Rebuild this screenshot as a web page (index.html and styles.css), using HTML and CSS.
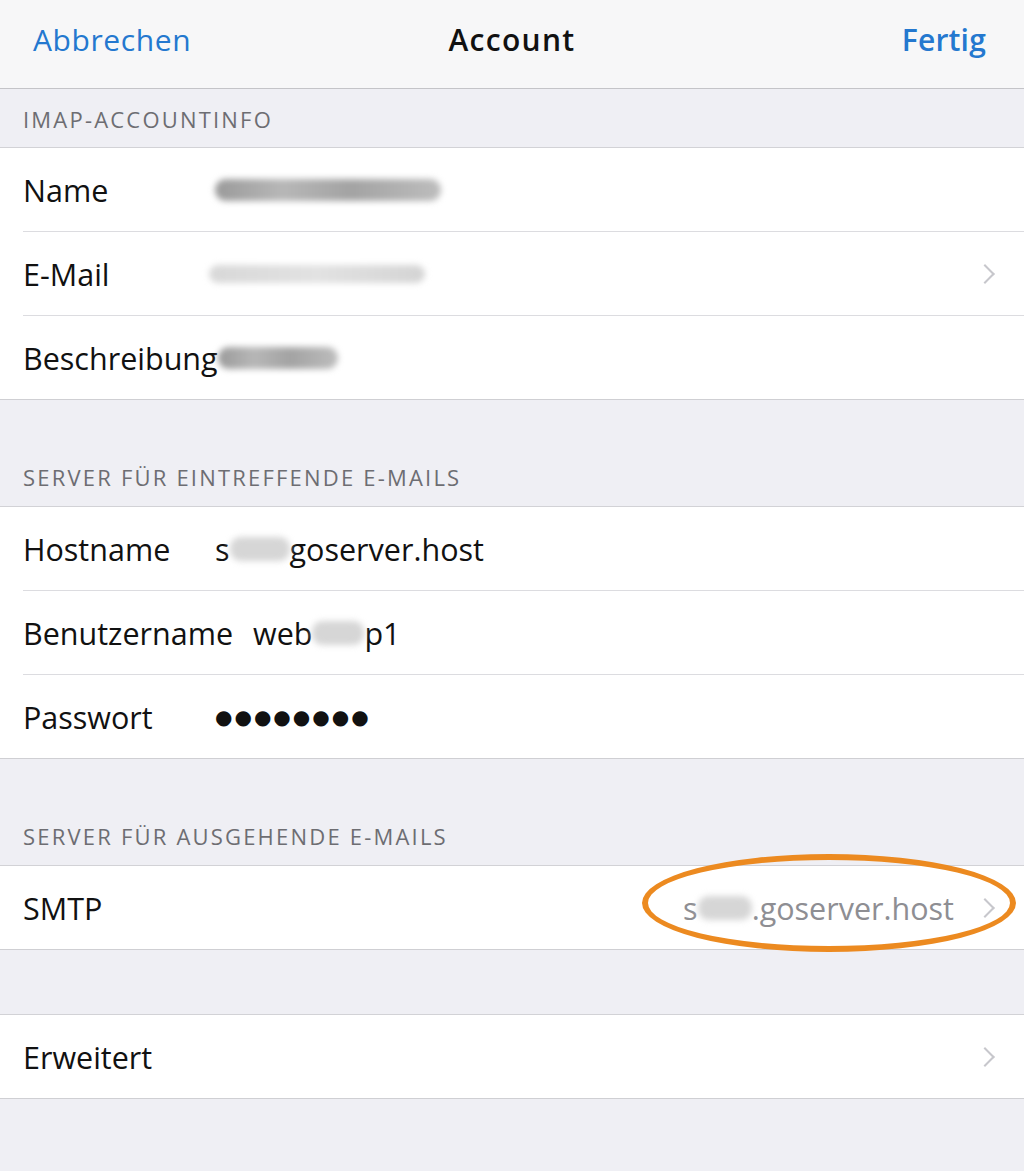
FILE: index.html
```html
<!DOCTYPE html>
<html lang="de">
<head>
<meta charset="utf-8">
<title>Account</title>
<link rel="stylesheet" href="styles.css">
</head>
<body>
<div class="screen">
  <header class="navbar">
    <span class="nav-btn">Abbrechen</span>
    <span class="nav-title">Account</span>
    <span class="nav-btn nav-done">Fertig</span>
  </header>

  <div class="section-head first">IMAP-ACCOUNTINFO</div>
  <div class="group">
    <div class="row"><span class="label">Name</span><span class="value"><span class="smudge dark" style="width:226px"></span></span></div>
    <div class="row"><span class="label">E-Mail</span><span class="value shift-left"><span class="smudge light" style="width:216px"></span></span><span class="chev"></span></div>
    <div class="row last"><span class="label auto">Beschreibung</span><span class="value"><span class="smudge dark" style="width:120px"></span></span></div>
  </div>

  <div class="section-head">SERVER FÜR EINTREFFENDE E-MAILS</div>
  <div class="group">
    <div class="row"><span class="label">Hostname</span><span class="value">s<span class="smudge light small" style="width:60px"></span>goserver.host</span></div>
    <div class="row"><span class="label auto gap">Benutzername</span><span class="value">web<span class="smudge light small" style="width:52px"></span>p1</span></div>
    <div class="row last"><span class="label">Passwort</span><span class="value dots">●●●●●●●●</span></div>
  </div>

  <div class="section-head">SERVER FÜR AUSGEHENDE E-MAILS</div>
  <div class="group">
    <div class="row last smtp">
      <span class="label">SMTP</span>
      <span class="value detail">s<span class="smudge light small" style="width:54px"></span>.goserver.host</span>
      <span class="chev"></span>
      <span class="ring"></span>
    </div>
  </div>

  <div class="spacer"></div>
  <div class="group">
    <div class="row last"><span class="label">Erweitert</span><span class="fill"></span><span class="chev"></span></div>
  </div>
</div>
</body>
</html>
```

FILE: styles.css
```css
html, body {
  margin: 0;
  padding: 0;
}
body {
  background: #efeff4;
  font-family: "Open Sans", "Liberation Sans", sans-serif;
  color: #111;
}
.screen {
  width: 1024px;
  min-height: 1171px;
  background: #efeff4;
}
.navbar {
  height: 89px;
  box-sizing: border-box;
  background: #f7f7f8;
  border-bottom: 1px solid #c4c4c8;
  display: flex;
  align-items: center;
  justify-content: space-between;
  padding: 0 38px 9px 33px;
  position: relative;
}
.nav-btn {
  color: #2478cf;
  font-size: 30px;
  letter-spacing: 0.6px;
}
.nav-done {
  font-weight: 600;
  letter-spacing: 0.2px;
}
.nav-title {
  position: absolute;
  left: 0;
  right: 0;
  top: 0;
  bottom: 9px;
  display: flex;
  align-items: center;
  justify-content: center;
  font-size: 30px;
  font-weight: 600;
  letter-spacing: 1.3px;
  pointer-events: none;
}
.section-head {
  height: 107px;
  box-sizing: border-box;
  display: flex;
  align-items: flex-end;
  padding: 0 0 14px 23px;
  font-size: 22px;
  letter-spacing: 2.2px;
  color: #6d6d72;
  border-bottom: 1px solid #d2d2d6;
}
.section-head.first {
  height: 59px;
  padding-bottom: 13px;
}
.group {
  background: #fff;
  border-bottom: 1px solid #cfcfd3;
}
.row {
  height: 83px;
  display: flex;
  align-items: center;
  margin-left: 23px;
  padding-right: 28px;
  border-bottom: 1px solid #dcdce0;
  position: relative;
}
.row.last {
  border-bottom: none;
}
.label {
  width: 192px;
  flex: none;
  font-size: 30.5px;
  white-space: nowrap;
}
.label.auto {
  width: auto;
}
.label.gap {
  margin-right: 20px;
}
.value {
  flex: 1;
  font-size: 30.5px;
  display: flex;
  align-items: center;
  white-space: nowrap;
}
.value.shift-left {
  margin-left: -6px;
}
.value.dots {
  font-family: "DejaVu Sans", sans-serif;
  font-size: 20px;
  letter-spacing: 2px;
  margin-left: 0;
}
.value.detail {
  justify-content: flex-end;
  color: #8e8e93;
  margin-right: 24px;
}
.fill {
  flex: 1;
}
.smudge {
  display: inline-block;
  height: 22px;
  border-radius: 11px;
  filter: blur(3px);
}
.smudge.dark {
  background: linear-gradient(90deg, #9a9a9a, #b7b7b7 30%, #a3a3a3 60%, #bdbdbd);
}
.smudge.light {
  background: linear-gradient(90deg, #d8d8d8, #e2e2e2 50%, #d4d4d4);
  height: 18px;
}
.smudge.small {
  height: 24px;
  background: #d6d6d6;
}
.chev {
  width: 12px;
  height: 12px;
  border-top: 2px solid #c7c7cc;
  border-right: 2px solid #c7c7cc;
  transform: rotate(45deg);
  flex: none;
  margin-right: 4px;
}
.ring {
  position: absolute;
  left: 619px;
  top: -12px;
  width: 362px;
  height: 86px;
  border: 6px solid #ec8a20;
  border-radius: 50%;
  pointer-events: none;
}
.spacer {
  height: 64px;
  border-bottom: 1px solid #d2d2d6;
}
```
